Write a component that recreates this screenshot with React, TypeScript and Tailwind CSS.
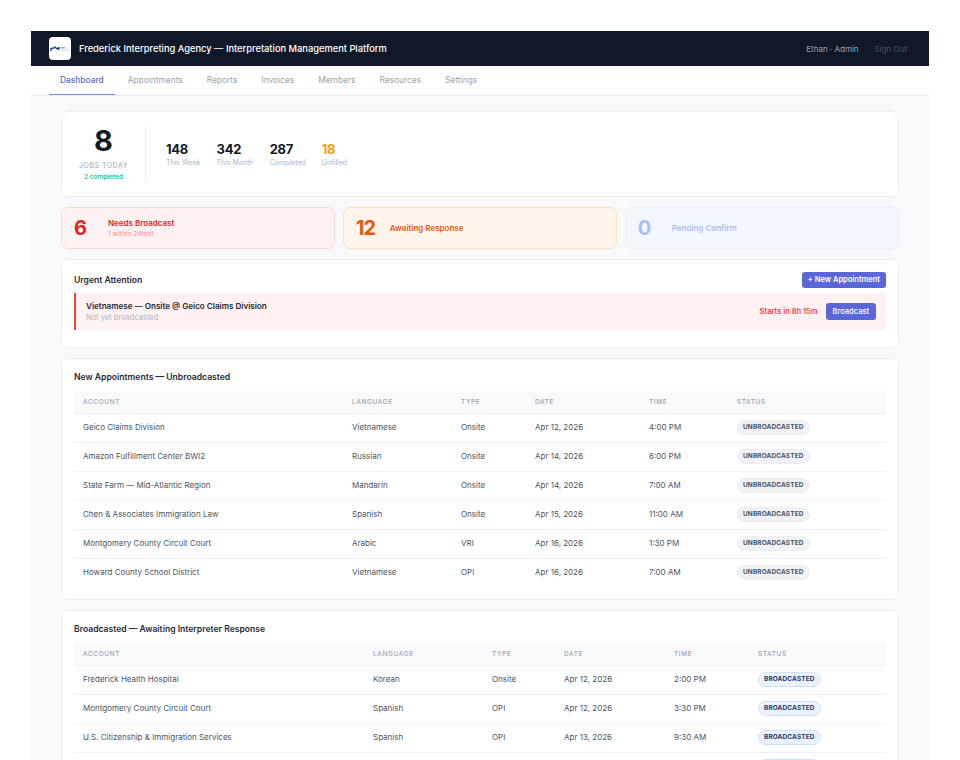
import React from 'react';

const NAV_ITEMS = ['Dashboard', 'Appointments', 'Reports', 'Invoices', 'Members', 'Resources', 'Settings'];

const NEW_ROWS = [
  ['Geico Claims Division', 'Vietnamese', 'Onsite', 'Apr 12, 2026', '4:00 PM'],
  ['Amazon Fulfillment Center BWI2', 'Russian', 'Onsite', 'Apr 14, 2026', '6:00 PM'],
  ['State Farm — Mid-Atlantic Region', 'Mandarin', 'Onsite', 'Apr 14, 2026', '7:00 AM'],
  ['Chen & Associates Immigration Law', 'Spanish', 'Onsite', 'Apr 15, 2026', '11:00 AM'],
  ['Montgomery County Circuit Court', 'Arabic', 'VRI', 'Apr 16, 2026', '1:30 PM'],
  ['Howard County School District', 'Vietnamese', 'OPI', 'Apr 16, 2026', '7:00 AM'],
];

const BROADCAST_ROWS = [
  ['Frederick Health Hospital', 'Korean', 'Onsite', 'Apr 12, 2026', '2:00 PM'],
  ['Montgomery County Circuit Court', 'Spanish', 'OPI', 'Apr 12, 2026', '3:30 PM'],
  ['U.S. Citizenship & Immigration Services', 'Spanish', 'OPI', 'Apr 13, 2026', '9:30 AM'],
];

const STATS = [
  { value: '148', label: 'This Week', color: 'text-[#111827]' },
  { value: '342', label: 'This Month', color: 'text-[#111827]' },
  { value: '287', label: 'Completed', color: 'text-[#111827]' },
  { value: '18', label: 'Unfilled', color: 'text-[#f59e0b]' },
];

function Logo() {
  return (
    <div className="flex h-[23px] w-[22px] items-center justify-center rounded-[4px] bg-white">
      <svg width="20" height="8" viewBox="0 0 20 8">
        <path d="M1 3.5 L4 3 L5 2 L6.5 3.5 L9 3.5 L9 2" fill="none" stroke="#1e3a8a" strokeWidth="1.3" />
        <path d="M1 3 V6 M8.5 2 V5" stroke="#1e3a8a" strokeWidth="1.3" />
        <rect x="11" y="2" width="4" height="1.5" fill="#93a8d0" />
        <rect x="11" y="4.5" width="8" height="1" fill="#c3cde0" />
      </svg>
    </div>
  );
}

function AlertCard({ value, title, sub, box, numberColor, titleColor, subColor }: {
  value: string; title: string; sub?: string; box: string; numberColor: string; titleColor: string; subColor?: string;
}) {
  return (
    <div className={`flex h-[42px] flex-1 items-center rounded-[7px] border pl-3 ${box}`}>
      <div className={`w-[34px] text-[20px] leading-none font-bold tracking-[-1px] ${numberColor}`}>{value}</div>
      <div>
        <div className={`text-[8px] leading-[12px] font-semibold ${titleColor}`}>{title}</div>
        {sub && <div className={`text-[6.7px] leading-[10px] ${subColor}`}>{sub}</div>}
      </div>
    </div>
  );
}

function Badge({ label, broadcast }: { label: string; broadcast?: boolean }) {
  return (
    <span
      className={
        broadcast
          ? 'block w-fit rounded-full border border-[#cfe0fb] bg-[#eaf2fe] px-[5px] py-[2px] text-[6.5px] leading-[9px] font-bold tracking-[0.1px] text-[#24386b]'
          : 'block w-fit rounded-full border border-[#eceef2] bg-[#f0f1f5] px-[5px] py-[2px] text-[6.5px] leading-[9px] font-bold tracking-[0.1px] text-[#4b5563]'
      }
    >
      {label}
    </span>
  );
}

function DataTable({ rows, widths, badge, broadcast, peek }: { rows: string[][]; widths: number[]; badge: string; broadcast?: boolean; peek?: boolean }) {
  const heads = ['ACCOUNT', 'LANGUAGE', 'TYPE', 'DATE', 'TIME', 'STATUS'];
  return (
    <table className="w-full table-fixed border-collapse">
      <colgroup>
        {widths.map((w, i) => (
          <col key={i} style={{ width: w }} />
        ))}
      </colgroup>
      <thead>
        <tr className="h-[22px] border-b border-[#eef0f4] bg-[#f8f9fb]">
          {heads.map(h => (
            <th key={h} className="pt-[2px] pl-[9px] text-left text-[6.5px] font-medium tracking-[0.6px] text-[#9ca3af]">{h}</th>
          ))}
        </tr>
      </thead>
      <tbody>
        {rows.map((row, i) => (
          <tr key={i} className="h-[29px] border-b border-[#f1f2f5] last:border-b-0">
            {row.map((cell, j) => (
              <td key={j} className="pb-[2px] pl-[9px] text-[8px] whitespace-nowrap text-[#4b5563]">{cell}</td>
            ))}
            <td className="pl-[9px]"><Badge label={badge} broadcast={broadcast} /></td>
          </tr>
        ))}
        {/* next row only just shows its pill at the fold */}
        {peek && (
          <tr className="h-[29px]">
            <td colSpan={5} />
            <td className="pl-[9px]">
              <span className="block h-[15px] w-[62px] rounded-full border border-[#cfe0fb] bg-[#eaf2fe]" />
            </td>
          </tr>
        )}
      </tbody>
    </table>
  );
}

export default function App() {
  return (
    <div className="h-[760px] overflow-hidden bg-white pt-[31px] pr-[31px] pl-[31px] font-['Inter','Liberation_Sans',sans-serif]">
      <div className="h-full bg-[#f8f9fb]">
        <header className="flex h-[35px] items-center justify-between bg-[#111827] pr-[22px] pl-[18px]">
          <div className="flex items-center gap-2">
            <Logo />
            <div className="text-[9.3px] font-medium text-white">Frederick Interpreting Agency — Interpretation Management Platform</div>
          </div>
          <div className="flex items-center gap-4 text-[8px]">
            <span className="text-[#9ca3af]">Ethan · Admin</span>
            <span className="text-[#4b5563]">Sign Out</span>
          </div>
        </header>

        <nav className="flex h-[30px] gap-[2px] border-b border-[#e9ebf0] bg-white pl-[18px]">
          {NAV_ITEMS.map((item, i) => (
            <div
              key={item}
              className={
                i === 0
                  ? 'flex items-center border-b-[1.5px] border-[#7c88ea] px-[11px] text-[8.4px] font-medium text-[#5b67d8]'
                  : 'flex items-center px-[11px] text-[8.4px] text-[#9ca3af]'
              }
            >
              {item}
            </div>
          ))}
        </nav>

        <main className="flex flex-col gap-[10px] px-[30px] pt-[15px]">
          <section className="flex h-[86px] items-center rounded-[7px] border border-[#eceef2] bg-white pl-[17px]">
            <div className="flex w-[49px] -translate-y-px flex-col items-center">
              <div className="text-[29px] leading-[34px] font-bold text-[#111827]">8</div>
              <div className="mt-[3px] text-[7px] leading-[10px] tracking-[0.5px] whitespace-nowrap text-[#9ca3af]">JOBS TODAY</div>
              <div className="mt-px text-[6.5px] leading-[10px] font-semibold whitespace-nowrap text-[#34c48b]">2 completed</div>
            </div>
            <div className="mr-5 ml-[17px] h-[55px] w-px bg-[#eceef2]" />
            <div className="flex gap-4">
              {STATS.map(s => (
                <div key={s.label}>
                  <div className={`text-[13px] leading-[17px] font-bold tracking-[-0.3px] ${s.color}`}>{s.value}</div>
                  <div className="text-[7px] leading-[10px] text-[#b0b5bf]">{s.label}</div>
                </div>
              ))}
            </div>
          </section>

          <section className="flex gap-[7.5px]">
            <AlertCard value="6" title="Needs Broadcast" sub="1 within 24hrs!" box="border-[#fdd5d5] bg-[#fef1f1]" numberColor="text-[#dc2626]" titleColor="text-[#dc2626]" subColor="text-[#f28b8b]" />
            <AlertCard value="12" title="Awaiting Response" box="border-[#fde3ba] bg-[#fff5ea]" numberColor="text-[#ea580c]" titleColor="text-[#ea580c]" />
            <AlertCard value="0" title="Pending Confirm" box="border-[#e8effb] bg-[#f3f6fc]" numberColor="text-[#a9c0f5]" titleColor="text-[#a9c0f5]" />
          </section>

          <section className="h-[89px] rounded-[7px] border border-[#eceef2] bg-white px-3 pt-3">
            <div className="flex h-[16px] items-center justify-between">
              <div className="text-[8.6px] font-semibold text-[#1f2937]">Urgent Attention</div>
              <button className="rounded-[3px] bg-[#5b67d8] px-[6px] py-[3px] text-[7.5px] leading-[10px] font-semibold text-white">+ New Appointment</button>
            </div>
            <div className="mt-[5px] flex h-[37px] items-center justify-between rounded-r-[4px] border-l-2 border-[#ef4444] bg-[#fef1f1] pr-[10px] pl-[10px]">
              <div>
                <div className="text-[8.1px] leading-[12px] font-semibold text-[#1f2937]">Vietnamese — Onsite @ Geico Claims Division</div>
                <div className="text-[7.5px] leading-[11px] text-[#b0b5bf]">Not yet broadcasted</div>
              </div>
              <div className="flex items-center gap-2">
                <span className="text-[7.5px] font-semibold text-[#ef4444]">Starts in 8h 15m</span>
                <button className="rounded-[3px] bg-[#5b67d8] px-[7px] py-[3.5px] text-[7.5px] leading-[10px] font-medium text-white">Broadcast</button>
              </div>
            </div>
          </section>

          <section className="h-[242px] rounded-[7px] border border-[#eceef2] bg-white px-3 pt-[11.5px]">
            <div className="mb-[7.5px] text-[8.6px] leading-[13px] font-semibold text-[#1f2937]">New Appointments — Unbroadcasted</div>
            <DataTable rows={NEW_ROWS} widths={[269, 109, 74, 114, 88, 158]} badge="UNBROADCASTED" />
          </section>

          <section className="rounded-[7px] border border-[#eceef2] bg-white px-3 pt-[11.5px]">
            <div className="mb-[7.5px] text-[8.6px] leading-[13px] font-semibold text-[#1f2937]">Broadcasted — Awaiting Interpreter Response</div>
            <DataTable rows={BROADCAST_ROWS} widths={[290, 119, 72, 110, 84, 137]} badge="BROADCASTED" broadcast peek />
          </section>
        </main>
      </div>
    </div>
  );
}
